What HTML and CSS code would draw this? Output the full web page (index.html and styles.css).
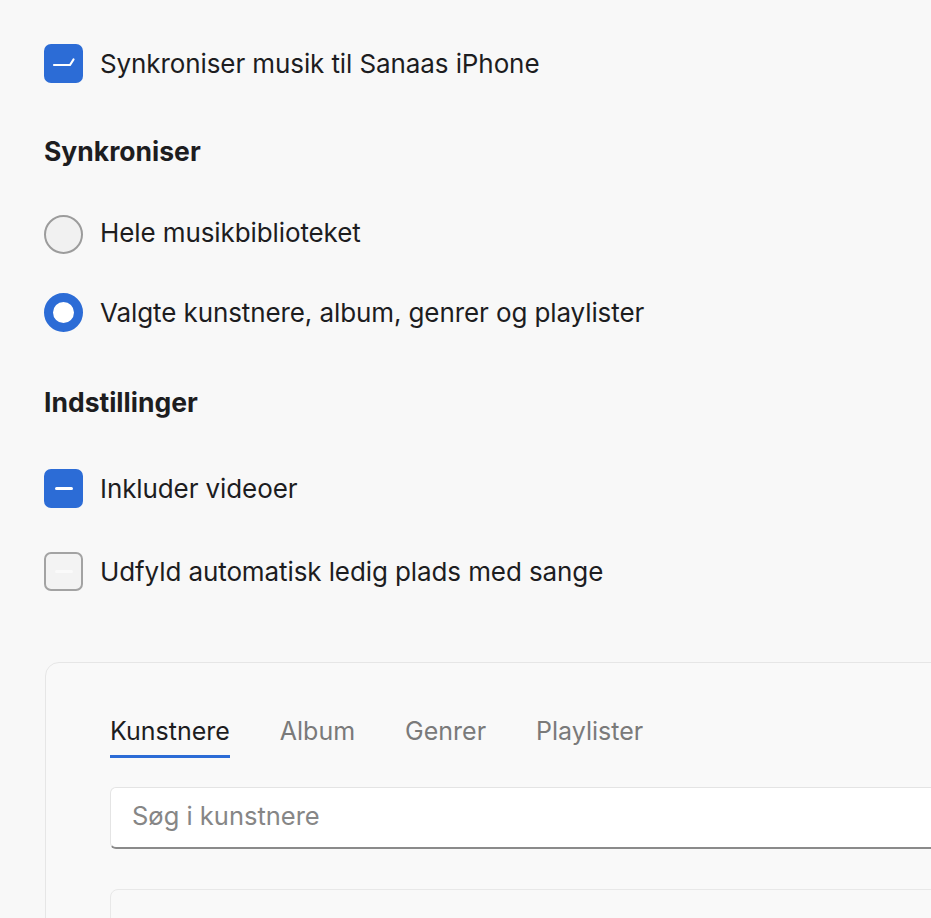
FILE: index.html
```html
<!DOCTYPE html>
<html lang="da">
<head>
<meta charset="utf-8">
<link rel="stylesheet" href="styles.css">
</head>
<body>
<main class="page">
  <label class="option first">
    <span class="box checked">
      <svg viewBox="0 0 39 39" width="39" height="39"><path d="M10 21 H26 L29.5 15.5" fill="none" stroke="#fff" stroke-width="2.2" stroke-linecap="round" stroke-linejoin="round"/></svg>
    </span>
    <span class="label">Synkroniser musik til Sanaas iPhone</span>
  </label>

  <h2 class="heading h-sync">Synkroniser</h2>

  <label class="option r1">
    <span class="radio"></span>
    <span class="label lift">Hele musikbiblioteket</span>
  </label>
  <label class="option r2">
    <span class="radio on"></span>
    <span class="label">Valgte kunstnere, album, genrer og playlister</span>
  </label>

  <h2 class="heading h-set">Indstillinger</h2>

  <label class="option c2">
    <span class="box checked"><span class="dash"></span></span>
    <span class="label">Inkluder videoer</span>
  </label>
  <label class="option c3">
    <span class="box"><span class="dash faint"></span></span>
    <span class="label">Udfyld automatisk ledig plads med sange</span>
  </label>

  <section class="card">
    <nav class="tabs">
      <span class="tab active">Kunstnere</span>
      <span class="tab">Album</span>
      <span class="tab">Genrer</span>
      <span class="tab">Playlister</span>
    </nav>
    <div class="search"><span class="placeholder">Søg i kunstnere</span></div>
    <div class="list"></div>
  </section>
</main>
</body>
</html>
```

FILE: styles.css
```css
html, body {
  margin: 0;
  padding: 0;
  background: #f8f8f8;
  overflow: hidden;
}
body {
  font-family: Inter, "Liberation Sans", sans-serif;
  color: #1d1d1f;
  width: 931px;
  height: 918px;
}
.page {
  padding: 44px 0 0 44px;
  display: flex;
  flex-direction: column;
  align-items: flex-start;
}
.option {
  display: flex;
  align-items: center;
  height: 39px;
  gap: 17px;
}
.label {
  font-size: 26px;
  letter-spacing: -0.1px;
}
.label.lift {
  margin-bottom: 4px;
}
.box {
  width: 39px;
  height: 39px;
  box-sizing: border-box;
  border-radius: 7px;
  border: 2px solid #a3a3a3;
  background: #f3f3f3;
  display: flex;
  align-items: center;
  justify-content: center;
  flex: none;
}
.box.checked {
  background: #2c6cd6;
  border: none;
}
.box svg { display: block; }
.dash {
  width: 18px;
  height: 2.5px;
  border-radius: 2px;
  background: #fff;
}
.dash.faint { background: #fafafa; }
.radio {
  width: 39px;
  height: 39px;
  box-sizing: border-box;
  border-radius: 50%;
  border: 2px solid #9c9c9c;
  background: #f1f1f1;
  flex: none;
}
.radio.on {
  border: 9px solid #2c6cd6;
  background: #fff;
}
.heading {
  margin: 0;
  font-size: 26.5px;
  font-weight: 700;
  line-height: 30px;
  letter-spacing: 0;
}
.h-sync { margin-top: 53px; }
.r1 { margin-top: 49px; }
.r2 { margin-top: 39px; }
.h-set { margin-top: 55px; }
.c2 { margin-top: 52px; }
.c3 { margin-top: 44px; }

.card {
  margin-top: 71px;
  margin-left: 1px;
  width: 960px;
  height: 300px;
  box-sizing: border-box;
  border: 1.5px solid #e6e6e6;
  border-radius: 14px;
  background: #f9f9f9;
  padding: 53px 0 0 64px;
}
.tabs {
  display: flex;
  gap: 50px;
}
.tab {
  font-size: 25px;
  color: #7a7a7a;
  line-height: 30px;
  padding-bottom: 9px;
  border-bottom: 3px solid transparent;
}
.tab.active {
  color: #1d1d1f;
  border-bottom-color: #2c6cd6;
}
.search {
  margin-top: 29px;
  height: 62px;
  box-sizing: border-box;
  background: #fff;
  border: 1px solid #e4e4e4;
  border-bottom: 2px solid #8a8a8a;
  border-radius: 6px;
  padding-left: 21px;
  display: flex;
  align-items: center;
  font-size: 25.5px;
  color: #868686;
}
.placeholder {
  margin-bottom: 4px;
}
.list {
  margin-top: 40px;
  height: 60px;
  border: 1.5px solid #e8e8e8;
  border-radius: 8px;
  background: #f9f9f9;
}
```
